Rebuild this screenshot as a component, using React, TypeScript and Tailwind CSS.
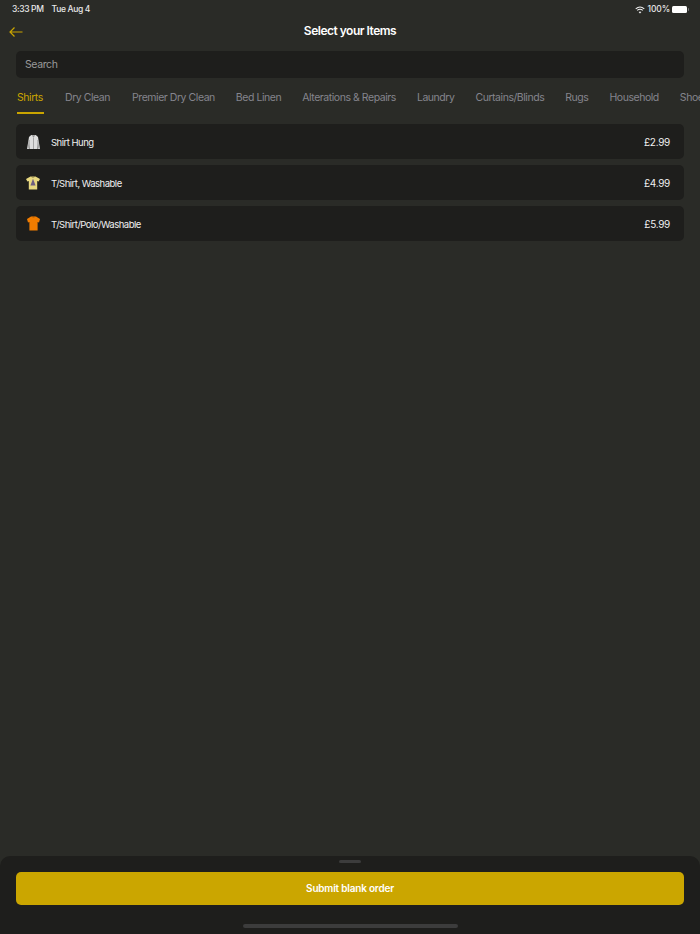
const tabs = [
  "Dry Clean",
  "Premier Dry Clean",
  "Bed Linen",
  "Alterations & Repairs",
  "Laundry",
  "Curtains/Blinds",
  "Rugs",
  "Household",
  "Shoes",
];

function HungShirt() {
  return (
    <svg width="15" height="16" viewBox="0 0 15 16">
      <path d="M5.2 1 L9.8 1 L12 3 L14 15 L11.6 15 L11.2 7 L11.2 15 L3.8 15 L3.8 7 L3.4 15 L1 15 L3 3 Z" fill="#dedede" />
      <path d="M7.5 3.5 V15 M3.2 6 L2.2 14.5 M11.8 6 L12.8 14.5" stroke="#7d7d7d" strokeWidth="0.6" fill="none" />
      <path d="M5.6 1.2 L7.5 3.4 L9.4 1.2 Z" fill="#8f8f8f" />
    </svg>
  );
}

function PrintedTee() {
  return (
    <svg width="14" height="14" viewBox="0 0 14 14">
      <path d="M4.5 0.5 L9.5 0.5 L14 3 L12.6 5.6 L11.2 5 L11.2 13.5 L2.8 13.5 L2.8 5 L1.4 5.6 L0 3 Z" fill="#e8d880" />
      <path d="M7 2.8 L9.6 9.6 L4.4 9.6 Z" fill="#6f5f80" />
      <path d="M5.2 0.5 Q7 2.2 8.8 0.5" stroke="#6b6238" strokeWidth="0.7" fill="none" />
    </svg>
  );
}

function OrangeTee() {
  return (
    <svg width="13" height="15" viewBox="0 0 13 15">
      <path d="M4 0.5 L9 0.5 L13 3 L12 6.5 L10.6 6 L10.6 14.5 L2.4 14.5 L2.4 6 L1 6.5 L0 3 Z" fill="#f07c00" />
      <path d="M4.8 0.5 Q6.5 2 8.2 0.5" stroke="#a85500" strokeWidth="0.7" fill="none" />
    </svg>
  );
}

const items = [
  { name: "Shirt Hung", price: "£2.99", icon: <HungShirt /> },
  { name: "T/Shirt, Washable", price: "£4.99", icon: <PrintedTee /> },
  { name: "T/Shirt/Polo/Washable", price: "£5.99", icon: <OrangeTee /> },
];

export default function App() {
  return (
    <div className="relative flex h-[934px] w-[700px] flex-col overflow-hidden bg-[#2a2b27] font-['Inter',sans-serif] text-white">
      {/* Status bar */}
      <div className="flex h-[17px] items-center justify-between pl-3 pr-[11px] pt-[2px] text-[8.5px] font-medium text-[#e8e8e8]">
        <div className="flex gap-2 tracking-[-0.35px]">
          <span>3:33 PM</span>
          <span>Tue Aug 4</span>
        </div>
        <div className="flex items-center tracking-[-0.1px]">
          <svg className="mr-[2px]" width="10" height="8" viewBox="0 0 10 8" fill="none" stroke="#f2f2f2">
            <path d="M0.7 2.8 Q5 -0.8 9.3 2.8" strokeWidth="1.1" />
            <path d="M2.2 4.4 Q5 2 7.8 4.4" strokeWidth="1.1" />
            <path d="M5 7.6 L3.6 6 Q5 4.9 6.4 6 Z" fill="#f2f2f2" stroke="none" />
          </svg>
          <span className="mr-[2px]">100%</span>
          <div className="flex items-center gap-px">
            <div className="h-[7px] w-[15px] rounded-[1.5px] bg-white" />
            <div className="h-[3px] w-px rounded-r-sm bg-[#77777a]" />
          </div>
        </div>
      </div>

      {/* Header */}
      <div className="relative flex h-[30px] items-center justify-center pb-[2px]">
        <svg className="absolute left-[9px] top-[9px]" width="14" height="12" viewBox="0 0 14 12" fill="none" stroke="#c9a400" strokeWidth="1.2">
          <path d="M13.5 6 H1 M5.5 1.5 L1 6 L5.5 10.5" />
        </svg>
        <h1 className="text-[12px] font-semibold tracking-[-0.5px]">Select your Items</h1>
      </div>

      {/* Search */}
      <div className="mx-4 mt-[4px] flex h-[27px] items-center rounded-[5px] bg-[#1e1e1c] px-[9px] text-[10.5px] tracking-[-0.4px] text-[#9a9a9a]">
        Search
      </div>

      {/* Tabs */}
      <div className="mt-[9px] flex gap-[21px] overflow-hidden pl-[17px] text-[10.5px] tracking-[-0.45px] whitespace-nowrap text-[#85858d]">
        <div className="flex h-[27px] w-[28px] flex-col justify-between text-[#c9a400]">
          <span className="pt-[3px]">Shirts</span>
          <div className="h-[2px] w-[27px] shrink-0 bg-[#c9a400]" />
        </div>
        {tabs.map((tab) => (
          <span key={tab} className="pt-[3px] nth-2:mr-px">
            {tab}
          </span>
        ))}
      </div>

      {/* Items */}
      <div className="mx-4 mt-[10px] flex flex-col gap-[6px]">
        {items.map((item) => (
          <div key={item.name} className="flex h-[35px] items-center rounded-[5px] bg-[#1e1e1c] pl-[9px] pr-[14px]">
            <div className="mr-[10px] flex w-4 justify-center">{item.icon}</div>
            <span className="flex-1 pt-[3px] text-[9.5px] tracking-[-0.5px] text-[#f0f0f0]">{item.name}</span>
            <span className="pt-[2px] text-[10px] tracking-[-0.3px] text-[#f0f0f0]">{item.price}</span>
          </div>
        ))}
      </div>

      {/* Bottom sheet */}
      <div className="absolute inset-x-0 bottom-0 h-[78px] rounded-t-[10px] bg-[#1e1e1c] px-4">
        <div className="mx-auto mt-[4px] h-[3px] w-[22px] rounded-full bg-[#3c3c3c]" />
        <button className="mt-[9px] h-[33px] w-full rounded-[5px] bg-[#cba600] text-[10px] font-semibold tracking-[-0.2px] text-white">
          Submit blank order
        </button>
        <div className="mx-auto mt-[19px] h-[4px] w-[215px] rounded-full bg-[#3c3c3c]" />
      </div>
    </div>
  );
}
